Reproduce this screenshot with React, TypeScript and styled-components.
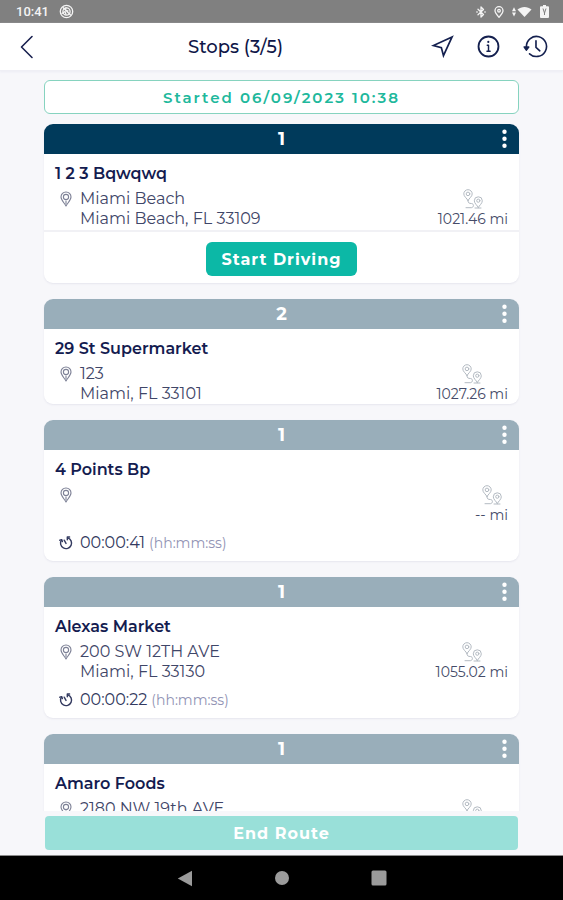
import React from "react";
import styled, { createGlobalStyle } from "styled-components";

const GlobalStyle = createGlobalStyle`
  *, *::before, *::after { box-sizing: border-box; }
  body { margin: 0; background: #f7f7fa; }
  button { font: inherit; color: inherit; border: 0; padding: 0; background: none; cursor: pointer; }
  h1, h2, p, ul { margin: 0; padding: 0; }
  svg { display: block; }
`;

const Screen = styled.div`
  display: flex;
  flex-direction: column;
  height: 100vh;
  background: #f7f7fa;
  color: #1c2552;
  font-family: Montserrat, Inter, "Liberation Sans", sans-serif;
`;

const StatusBar = styled.div`
  display: flex;
  flex: none;
  align-items: center;
  gap: 10px;
  height: 23px;
  padding: 0 14px 0 16px;
  background: #808080;
  color: #f4f4f4;
  font-family: Roboto, sans-serif;
  font-size: 13px;
  font-weight: 500;
`;

const StatusIcons = styled.div`
  display: flex;
  align-items: center;
  gap: 8px;
  margin-left: auto;
`;

const Header = styled.header`
  display: flex;
  flex: none;
  align-items: center;
  height: 48px;
  padding-right: 15px;
  background: #fff;
  border-bottom: 1px solid #efeff5;
  box-shadow: 0 1px 2px #ececf4;
`;

const BackButton = styled.button`
  display: flex;
  justify-content: flex-end;
  width: 40px;
  padding-right: 6px;
  color: #1a2150;
`;

const Title = styled.h1`
  flex: 1;
  text-align: center;
  font-size: 18px;
  font-weight: 500;
  line-height: 24px;
  color: #0f1648;
`;

const HeaderActions = styled.div`
  display: flex;
  gap: 23px;
  color: #14204f;
`;

const StartedArea = styled.div`
  flex: none;
  padding: 9px 44px 10px;
`;

const StartedBanner = styled.p`
  height: 34px;
  border: 1px solid #86d3bf;
  border-radius: 6px;
  background: #fff;
  color: #20b89c;
  font-size: 15px;
  font-weight: 600;
  letter-spacing: 2px;
  line-height: 34px;
  text-align: center;
`;

const StopList = styled.ul`
  display: flex;
  flex: 1;
  flex-direction: column;
  gap: 16px;
  min-height: 0;
  padding: 0 44px;
  overflow-y: auto;
  scrollbar-width: none;
  list-style: none;
`;

const Card = styled.li`
  flex: none;
  border-radius: 9px;
  background: #fff;
  box-shadow: 0 1px 2px #e6e6ee;
`;

const CardHeader = styled.div<{ $active?: boolean }>`
  display: grid;
  grid-template-columns: 30px 1fr 30px;
  align-items: center;
  height: 30px;
  border-radius: 9px 9px 0 0;
  background: ${(p) => (p.$active ? "#003a5b" : "#99aeba")};
  color: #fff;
`;

const StopNumber = styled.span`
  grid-column: 2;
  text-align: center;
  font-size: 18px;
  font-weight: 700;
`;

const MenuButton = styled.button`
  display: flex;
  align-items: center;
  justify-content: center;
  height: 30px;
`;

const CardBody = styled.div<{ $compact?: boolean }>`
  padding: 10px 11px ${(p) => (p.$compact ? 0 : 8)}px;
`;

const StopName = styled.h2`
  margin-bottom: 5px;
  color: #141c50;
  font-size: 16px;
  font-weight: 600;
  line-height: 20px;
`;

const InfoRow = styled.div`
  display: flex;
  min-height: 40px;
`;

const IconCell = styled.span`
  display: flex;
  flex: none;
  align-items: center;
  justify-content: center;
  width: 22px;
  height: 20px;
  margin-right: 3px;
`;

const Address = styled.p`
  flex: 1;
  color: #3f4668;
  font-size: 16px;
  line-height: 20px;
`;

const Distance = styled.div`
  display: flex;
  flex: none;
  flex-direction: column;
  align-items: center;
  color: #454b68;
  font-size: 14px;
  line-height: 20px;
`;

const TimerRow = styled.div`
  display: flex;
  align-items: center;
  margin-top: 8px;
  color: #333a60;
  font-size: 16px;
  line-height: 20px;
`;

const TimerUnit = styled.span`
  margin-left: 4px;
  color: #9193b4;
  font-size: 14px;
`;

const CardFooter = styled.div`
  display: flex;
  justify-content: center;
  margin-top: 1px;
  padding: 10px 0 7px;
  border-top: 2px solid #f1f1f5;
`;

const StartButton = styled.button`
  height: 34px;
  padding: 0 16px;
  border-radius: 6px;
  background: #0cb8a6;
  color: #fff;
  font-size: 16px;
  font-weight: 700;
  letter-spacing: 1px;
`;

const BottomArea = styled.div`
  flex: none;
  padding: 5px 45px;
  border-bottom: 1px solid #8b8b8b;
`;

const EndButton = styled.button`
  width: 100%;
  height: 34px;
  border-radius: 4px;
  background: #99e0d9;
  color: #fff;
  font-size: 16px;
  font-weight: 700;
  letter-spacing: 1px;
`;

const NavBar = styled.nav`
  display: flex;
  flex: none;
  align-items: center;
  justify-content: center;
  gap: 81px;
  height: 44px;
  background: #000;
  color: #9b9b9b;
`;

const stroke = {
  fill: "none",
  stroke: "currentColor",
  strokeLinecap: "round" as const,
  strokeLinejoin: "round" as const,
};

const AppBadgeIcon = () => (
  <svg width="15" height="15" viewBox="0 0 15 15" {...stroke} strokeWidth="1.3">
    <circle cx="7.5" cy="7.5" r="6.2" />
    <circle cx="7.5" cy="7.5" r="3.6" />
    <path d="M4 3.5l7.5 7.5M7 3.8c-1 2 0 3 2 3M3 9.5l3-2 1 3" />
  </svg>
);

const BluetoothIcon = () => (
  <svg width="10" height="12" viewBox="0 0 10 12" {...stroke} strokeWidth="1.3">
    <path d="M2 3.2l5.5 5.3L5 11V1l2.5 2.5L2 8.8M.8 6h.4M8.8 6h.4" />
  </svg>
);

const StatusPinIcon = () => (
  <svg width="10" height="12" viewBox="0 0 10 12" {...stroke} strokeWidth="1.3">
    <path d="M5 11.3C3 8.8 1 6.8 1 4.7a4 4 0 018 0c0 2.1-2 4.1-4 6.6z" />
    <circle cx="5" cy="4.7" r="1.3" />
  </svg>
);

const WifiIcon = () => (
  <svg width="20" height="12" viewBox="0 0 20 12" fill="currentColor">
    <path d="M0 5.300l2-4 2 4zM0 6.500l2 4 2-4z" />
    <path d="M5.500 3.600C9.500.2 15.500.2 19.500 3.600L12.500 11z" />
  </svg>
);

const BatteryIcon = () => (
  <svg width="9" height="13" viewBox="0 0 9 13">
    <path d="M3 0h3v1.200h2q1 0 1 1V12q0 1-1 1H1q-1 0-1-1V2.200q0-1 1-1h2z" fill="currentColor" />
    <path d="M3 3.500l1.500 4.500L6 3.500M4.500 8v2" fill="none" stroke="#808080" />
  </svg>
);

const BackIcon = () => (
  <svg width="14" height="24" viewBox="0 0 14 24" {...stroke} strokeWidth="1.6">
    <path d="M12 1.500L1.500 12 12 22.500" />
  </svg>
);

const NavigateIcon = () => (
  <svg width="23" height="23" viewBox="0 0 24 24" {...stroke} strokeWidth="1.8" strokeLinejoin="miter">
    <path d="M22 2L13 21.500 10.800 13.200 2.500 11z" />
  </svg>
);

const InfoIcon = () => (
  <svg width="23" height="23" viewBox="0 0 24 24" {...stroke} strokeWidth="1.9">
    <circle cx="12" cy="12" r="10.400" />
    <path d="M10.700 10.600H12V17M10.400 17h3.300" strokeWidth="1.500" />
    <circle cx="11.800" cy="7.200" r="1.100" fill="currentColor" stroke="none" />
  </svg>
);

const HistoryIcon = () => (
  <svg width="25" height="23" viewBox="0 0 25 24" {...stroke} strokeWidth="1.7">
    <path d="M3 13.500V12A10.500 10.500 0 1 1 6.300 19.600" />
    <path d="M.8 12.500h4.600L3 15.800z" fill="currentColor" />
    <path d="M13 6V13l4 3.500" />
  </svg>
);

const DotsIcon = () => (
  <svg width="6" height="20" viewBox="0 0 6 20" fill="currentColor">
    <circle cx="3.500" cy="2.800" r="2.200" />
    <circle cx="3.500" cy="9.800" r="2.200" />
    <circle cx="3.500" cy="16.800" r="2.200" />
  </svg>
);

const PinIcon = () => (
  <svg width="12" height="16" viewBox="0 0 12 16" {...stroke} stroke="#7d8196" strokeWidth="1.1">
    <path d="M6 15C4.300 11.800 1 9 1 6a5 5 0 0110 0c0 3-3.300 5.800-5 9z" />
    <circle cx="6" cy="6" r="2.600" />
    <path d="M6 10v3" />
  </svg>
);

const RouteIcon = () => (
  <svg width="20" height="20" viewBox="0 0 20 20" {...stroke} stroke="#b3bac2" strokeWidth="1">
    <path d="M5 11.500C3.800 9.200 .8 7.500 .8 4.900a4.200 4.200 0 018.400 0C9.200 7.500 6.200 9.200 5 11.500z" />
    <circle cx="5" cy="4.900" r="1.800" />
    <path d="M15.300 18.500c-1-2.300-4-4-4-6.700a4 4 0 018 0c0 2.700-2.900 4.400-4 6.700z" />
    <circle cx="15.300" cy="11.700" r="1.600" />
    <path d="M5 11.500c0 2.500 1 3 3.500 3 2.700.2 2.500 4-.2 4.200H3M12 19h6" />
  </svg>
);

const TimerIcon = () => (
  <svg width="14" height="14" viewBox="0 0 14 14" {...stroke} strokeWidth="1.4">
    <path d="M8.800 1.900A5.500 5.500 0 1 1 2.500 4" />
    <path d="M.8 4.200l2-.6.600 2M10.600 1H8.300v2.800M5.200 4.200L7 7.400" />
  </svg>
);

const NavBackIcon = () => (
  <svg width="16" height="17" viewBox="0 0 16 17" fill="currentColor">
    <path d="M15 .8v15.400L.8 8.500z" />
  </svg>
);

const NavHomeIcon = () => (
  <svg width="16" height="16" viewBox="0 0 16 16" fill="currentColor">
    <circle cx="8" cy="8" r="7" />
  </svg>
);

const NavRecentIcon = () => (
  <svg width="16" height="16" viewBox="0 0 16 16" fill="currentColor">
    <rect x="0.500" y="0.500" width="15" height="15" rx="1.500" />
  </svg>
);

type Stop = {
  number: number;
  name: string;
  address: string[];
  distance: string;
  timer?: string;
  active?: boolean;
};

const stops: Stop[] = [
  { number: 1, name: "1 2 3 Bqwqwq", address: ["Miami Beach", "Miami Beach, FL 33109"], distance: "1021.46 mi", active: true },
  { number: 2, name: "29 St Supermarket", address: ["123", "Miami, FL 33101"], distance: "1027.26 mi" },
  { number: 1, name: "4 Points Bp", address: [], distance: "-- mi", timer: "00:00:41" },
  { number: 1, name: "Alexas Market", address: ["200 SW 12TH AVE", "Miami, FL 33130"], distance: "1055.02 mi", timer: "00:00:22" },
  { number: 1, name: "Amaro Foods", address: ["2180 NW 19th AVE"], distance: "1055.02 mi" },
];

const StopCard = ({ stop }: { stop: Stop }) => (
  <Card>
    <CardHeader $active={stop.active}>
      <StopNumber>{stop.number}</StopNumber>
      <MenuButton aria-label={`Options for ${stop.name}`}>
        <DotsIcon />
      </MenuButton>
    </CardHeader>
    <CardBody $compact={!stop.timer}>
      <StopName>{stop.name}</StopName>
      <InfoRow>
        <IconCell>
          <PinIcon />
        </IconCell>
        <Address>
          {stop.address.map((line, i) => (
            <React.Fragment key={line}>
              {i > 0 && <br />}
              {line}
            </React.Fragment>
          ))}
        </Address>
        <Distance>
          <RouteIcon />
          <span>{stop.distance}</span>
        </Distance>
      </InfoRow>
      {stop.timer && (
        <TimerRow>
          <IconCell>
            <TimerIcon />
          </IconCell>
          {stop.timer}
          <TimerUnit>(hh:mm:ss)</TimerUnit>
        </TimerRow>
      )}
    </CardBody>
    {stop.active && (
      <CardFooter>
        <StartButton>Start Driving</StartButton>
      </CardFooter>
    )}
  </Card>
);

export default function App() {
  return (
    <Screen>
      <GlobalStyle />
      <StatusBar>
        <span>10:41</span>
        <AppBadgeIcon />
        <StatusIcons>
          <BluetoothIcon />
          <StatusPinIcon />
          <WifiIcon />
          <BatteryIcon />
        </StatusIcons>
      </StatusBar>
      <Header>
        <BackButton aria-label="Back">
          <BackIcon />
        </BackButton>
        <Title>Stops (3/5)</Title>
        <HeaderActions>
          <button aria-label="Navigate">
            <NavigateIcon />
          </button>
          <button aria-label="Information">
            <InfoIcon />
          </button>
          <button aria-label="History">
            <HistoryIcon />
          </button>
        </HeaderActions>
      </Header>
      <StartedArea>
        <StartedBanner>Started 06/09/2023 10:38</StartedBanner>
      </StartedArea>
      <StopList>
        {stops.map((stop) => (
          <StopCard key={stop.name} stop={stop} />
        ))}
      </StopList>
      <BottomArea>
        <EndButton>End Route</EndButton>
      </BottomArea>
      <NavBar aria-label="System navigation">
        <button aria-label="System back">
          <NavBackIcon />
        </button>
        <button aria-label="Home">
          <NavHomeIcon />
        </button>
        <button aria-label="Recent apps">
          <NavRecentIcon />
        </button>
      </NavBar>
    </Screen>
  );
}
